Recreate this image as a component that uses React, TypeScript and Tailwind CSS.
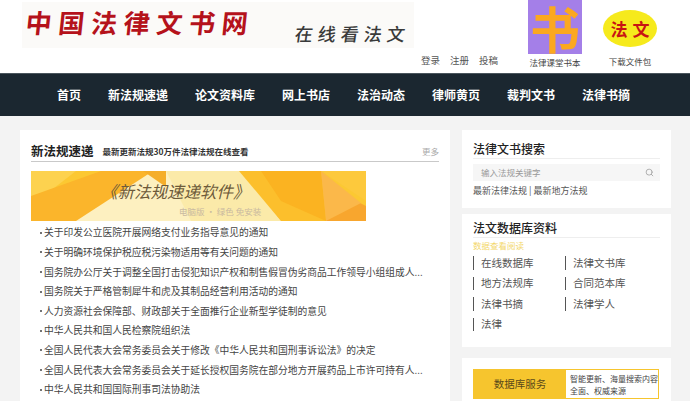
import React from 'react';
import { Search } from 'lucide-react';

const cjk = "font-['Noto_Sans_CJK_SC','Noto_Sans',sans-serif]";

const navItems = ['首页', '新法规速递', '论文资料库', '网上书店', '法治动态', '律师黄页', '裁判文书', '法律书摘'];

const laws = [
  '关于印发公立医院开展网络支付业务指导意见的通知',
  '关于明确环境保护税应税污染物适用等有关问题的通知',
  '国务院办公厅关于调整全国打击侵犯知识产权和制售假冒伪劣商品工作领导小组组成人...',
  '国务院关于严格管制犀牛和虎及其制品经营利用活动的通知',
  '人力资源社会保障部、财政部关于全面推行企业新型学徒制的意见',
  '中华人民共和国人民检察院组织法',
  '全国人民代表大会常务委员会关于修改《中华人民共和国刑事诉讼法》的决定',
  '全国人民代表大会常务委员会关于延长授权国务院在部分地方开展药品上市许可持有人...',
  '中华人民共和国国际刑事司法协助法',
];

const dbLinks = ['在线数据库', '法律文书库', '地方法规库', '合同范本库', '法律书摘', '法律学人', '法律'];

const Header = () => (
  <div className="flex h-[73px] bg-white">
    <div className="ml-[22px] mt-[2px] flex h-[46px] w-[392px] items-start bg-[#fbfaf8]">
      <div className="ml-[4px] mt-[3px] flex w-[222px] justify-between text-[26px] font-bold leading-[34px] text-[#b5121b] skew-x-[-6deg]">
        {'中国法律文书网'.split('').map((c, i) => (
          <span key={i}>{c}</span>
        ))}
      </div>
      <div className="ml-[47px] mt-[19px] flex w-[110px] justify-between text-[18px] font-medium leading-[24px] text-[#3a3a3a] skew-x-[-8deg]">
        {'在线看法文'.split('').map((c, i) => (
          <span key={i}>{c}</span>
        ))}
      </div>
    </div>
    <div className="ml-[7px] mt-[53px] flex h-[14px] gap-[10px] text-[9.5px] leading-[14px] text-[#555]">
      <span>登录</span>
      <span>注册</span>
      <span>投稿</span>
    </div>
    <div className="ml-[30px] flex w-[54px] flex-col items-center">
      <div className="flex h-[54px] w-[54px] items-center justify-center overflow-hidden bg-[#a47fe8] text-[50px] font-bold leading-none text-[#fba81f]">
        书
      </div>
      <div className="mt-[1px] whitespace-nowrap text-[8.5px] leading-[14px] text-[#444]">法律课堂书本</div>
    </div>
    <div className="ml-[13px] flex w-[70px] flex-col items-center">
      <div className="mt-[10px] flex h-[37px] w-[54px] items-center justify-center gap-[5px] rounded-[50%] bg-[#f6ea1c] text-[17px] font-bold leading-none text-[#c81414]">
        <span>法</span>
        <span>文</span>
      </div>
      <div className="mt-[7px] whitespace-nowrap text-[8.5px] leading-[14px] text-[#444]">下载文件包</div>
    </div>
  </div>
);

const Nav = () => (
  <div className="flex h-[43px] items-center gap-[27px] border-t border-[#4a555c] bg-[#1b2730] pl-[57px] text-[12px] font-bold text-white">
    {navItems.map((n) => (
      <span key={n} className="whitespace-nowrap">
        {n}
      </span>
    ))}
  </div>
);

const Banner = () => (
  <div className="relative mt-[9px] h-[50px] w-[335px] overflow-hidden bg-[#fcc832]">
    <svg className="absolute inset-0" width="335" height="50" viewBox="0 0 335 50">
      <polygon points="0,0 45,0 0,35" fill="#fdd24f" />
      <polygon points="0,50 0,25 70,0 122,0 50,50" fill="#fbb52b" />
      <polygon points="45,50 122,0 135,0 135,0 210,0 250,50" fill="#fdf0c0" />
      <polygon points="112,0 135,0 135,16" fill="#f5ae2a" />
      <polygon points="135,0 210,0 250,50 160,50" fill="#fbeaa9" />
      <polygon points="208,0 290,0 310,50 250,50" fill="#fcbf2c" />
      <polygon points="230,0 290,0 295,50 250,30" fill="#fbb321" />
      <polygon points="295,15 335,35 335,50 295,50" fill="#f8a62e" />
      <polygon points="290,0 335,0 335,30" fill="#fdc93c" />
      <polygon points="290,0 330,32 295,50" fill="#fbb84a" />
    </svg>
    <div className="absolute left-[70px] top-[8px] whitespace-nowrap text-[16.5px] italic leading-[24px] text-[#6d5a3a]">
      《新法规速递软件》
    </div>
    <div className="absolute left-[148px] top-[34px] whitespace-nowrap text-[8.5px] leading-[12px] text-[#c9b9a0]">
      电脑版 · 绿色 免安装
    </div>
  </div>
);

const MainCard = () => (
  <div className="h-[271px] w-[430px] overflow-hidden bg-white px-[11px] pt-[12px]">
    <div className="flex h-[20px] items-center border-b border-[#c9c9c9] pb-[1px]">
      <span className="text-[12.5px] font-bold text-[#222]">新法规速递</span>
      <span className="ml-[9px] text-[8.5px] font-bold text-[#333]">最新更新法规30万件法律法规在线查看</span>
      <span className="ml-auto text-[8.5px] text-[#aaa]">更多</span>
    </div>
    <Banner />
    <ul className="mt-[2px]">
      {laws.map((t) => (
        <li key={t} className="flex h-[19.6px] items-center whitespace-nowrap pl-[9px] text-[9.75px] text-[#444]">
          <span className="mr-[2px] h-[2px] w-[2px] shrink-0 rounded-full bg-[#444]" />
          {t}
        </li>
      ))}
    </ul>
  </div>
);

const SearchCard = () => (
  <div className="h-[78px] bg-white px-[11px] pt-[10px]">
    <div className="h-[19px] border-b border-[#eee] text-[12px] font-medium leading-[17px] text-[#222]">法律文书搜索</div>
    <div className="mt-[5px] flex h-[17px] items-center justify-between bg-[#f6f6f6] pl-[8px] pr-[6px] text-[8.5px] text-[#999]">
      <span>输入法规关键字</span>
      <Search size={9} className="text-[#999]" />
    </div>
    <div className="mt-[3px] text-[9px] leading-[14px] text-[#555]">最新法律法规 | 最新地方法规</div>
  </div>
);

const DbCard = () => (
  <div className="h-[133px] bg-white px-[11px] pt-[6px]">
    <div className="h-[18px] border-b border-[#eee] text-[12px] font-medium leading-[16px] text-[#222]">法文数据库资料</div>
    <div className="mt-[1px] text-[8.5px] leading-[13px] text-[#f3d76a]">数据查看阅读</div>
    <div className="mt-[4px] grid grid-cols-[92px_1fr] gap-y-[7px]">
      {dbLinks.map((l) => (
        <div key={l} className="flex h-[13.5px] items-center border-l border-[#555] pl-[7px] text-[10.5px] text-[#555]">
          {l}
        </div>
      ))}
    </div>
  </div>
);

const ServiceCard = () => (
  <div className="h-[43px] bg-white px-[11px] pt-[11px]">
    <div className="flex h-[30px] w-[186px] bg-[#f6c52e] p-[1px]">
      <div className="flex w-[92px] items-center justify-center text-[10.5px] text-[#5a4a1a]">数据库服务</div>
      <div className="flex-1 bg-white pl-[4px] pt-[3px] text-[8px] leading-[12px] text-[#444]">
        智能更新、海量搜索内容全面、权威来源
      </div>
    </div>
  </div>
);

export default function App() {
  return (
    <div className={`h-[401px] w-[690px] overflow-hidden bg-[#f3f3f3] ${cjk}`}>
      <Header />
      <Nav />
      <div className="flex gap-[12px] pl-[20px] pt-[14px]">
        <MainCard />
        <div className="flex w-[209px] flex-col">
          <SearchCard />
          <div className="h-[6px]" />
          <DbCard />
          <div className="h-[11px]" />
          <ServiceCard />
        </div>
      </div>
    </div>
  );
}
